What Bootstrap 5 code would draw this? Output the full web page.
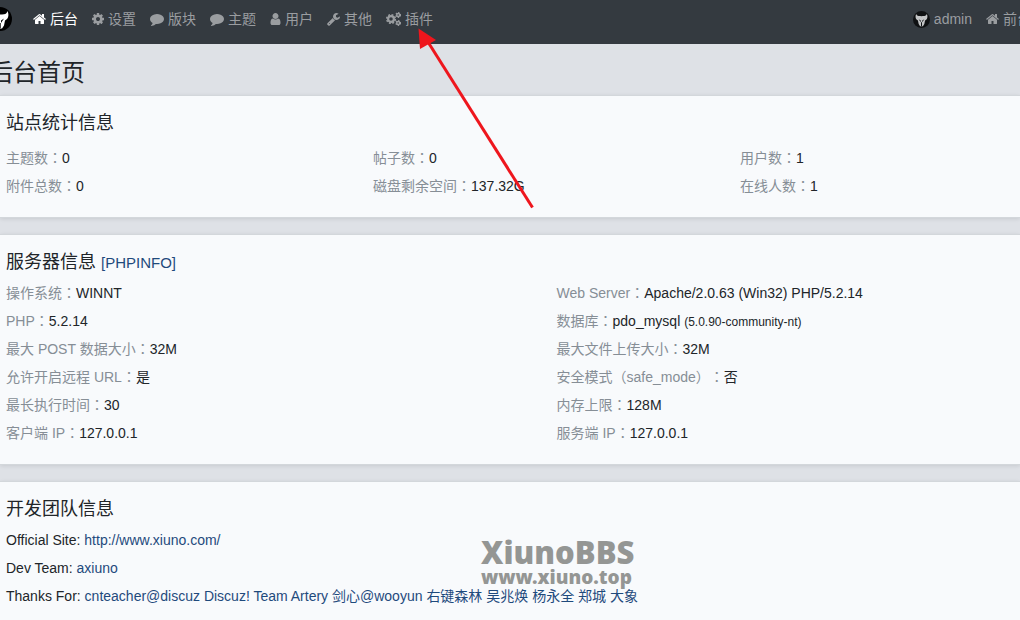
<!DOCTYPE html>
<html lang="zh-CN">
<head>
<meta charset="utf-8">
<meta name="viewport" content="width=device-width, initial-scale=1">
<title>后台首页</title>
<link href="https://cdn.jsdelivr.net/npm/bootstrap@5.3.0/dist/css/bootstrap.min.css" rel="stylesheet">
<style>
body{font:14px/28px "Liberation Sans","Noto Sans CJK SC",sans-serif;color:#212529;background:#dee1e6;overflow-x:hidden}
a{color:#1f4a7c;text-decoration:none}
.topbar{height:44px;padding-top:5px;background:#343a40;overflow:hidden}
.topbar .nav-link{color:#9a9da0;padding:0 7px;line-height:28px;display:flex;align-items:center;gap:4px;white-space:nowrap}
.topbar .nav-link.active{color:#fff}
.topbar .nav-link svg{fill:currentColor}
.topbar .navbar-brand{margin:0 14px 0 -12px;padding:0;line-height:1}
.topbar .side-nav{margin-right:-18px}
.page-title{font-size:24px;line-height:44px;padding-top:7px;margin:0 0 0 -11px;font-weight:400}
.panel{background:#f8fafc;border:solid #d3d7db;border-width:1px 0;border-radius:0;box-shadow:0 1px 4px rgba(0,0,0,.1);padding:16px 0 17px 6px;margin-bottom:16px;overflow:hidden}
.panel h2{font-size:18px;line-height:22px;margin:0 0 6px;font-weight:400}
.panel h2 a{font-size:15px;line-height:1}
.panel h2.stats-title{margin-bottom:10px}
.wide-row{width:calc(108% + 6px)}
.item-name{color:#868e96}
.mid{font-family:"Noto Sans CJK TC",sans-serif;line-height:1;text-spacing-trim:space-all;font-feature-settings:"chws" 0,"halt" 0;font-kerning:none}
.note{font-size:12px;line-height:1}
.arrow{left:410px;top:20px;z-index:5;pointer-events:none}
.brand-stamp{left:481px;top:536px;color:#949694;font-family:"Noto Sans",sans-serif;font-weight:900;font-size:31px;line-height:32px;pointer-events:none}
.brand-stamp small{display:block;font-size:19px;line-height:18px;font-weight:900}
</style>
</head>
<body class="position-relative">
<svg width="0" height="0" class="position-absolute" aria-hidden="true">
<symbol id="home" viewBox="64 0 1664 1792"><path d="M1472 992v480q0 26-19 45t-45 19h-384v-384h-256v384h-384q-26 0-45-19t-19-45v-480q0-1 .5-3t.5-3l575-474 575 474q1 2 1 6zm223-69l-62 74q-8 9-21 11h-3q-13 0-21-7l-692-577-692 577q-12 8-24 7-13-2-21-11l-62-74q-8-10-7-23.5t11-21.5l719-599q32-26 76-26t76 26l244 204v-195q0-14 9-23t23-9h192q14 0 23 9t9 23v408l219 182q10 8 11 21.5t-7 23.5z"/></symbol>
<symbol id="cog" viewBox="128 0 1536 1792"><path d="M1152 896q0-106-75-181t-181-75-181 75-75 181 75 181 181 75 181-75 75-181zm512-109v222q0 12-8 23t-20 13l-185 28q-19 54-39 91 35 50 107 138 10 12 10 25t-9 23q-27 37-99 108t-94 71q-12 0-26-9l-138-108q-44 23-91 38-16 136-29 186-7 28-36 28h-222q-14 0-24.500-8.500t-11.500-21.500l-28-184q-49-16-90-37l-141 107q-10 9-25 9-14 0-25-11-126-114-165-168-7-10-7-23 0-12 8-23 15-21 51-66.500t54-70.500q-27-50-41-99l-183-27q-13-2-21-12.500t-8-23.500v-222q0-12 8-23t19-13l186-28q14-46 39-92-40-57-107-138-10-12-10-24 0-10 9-23 26-36 98.500-107.500t94.500-71.500q13 0 26 10l138 107q44-23 91-38 16-136 29-186 7-28 36-28h222q14 0 24.500 8.500t11.500 21.500l28 184q49 16 90 37l142-107q9-9 24-9 13 0 25 10 129 119 165 170 7 8 7 22 0 12-8 23-15 21-51 66.500t-54 70.500q26 50 41 98l183 28q13 2 21 12.500t8 23.500z"/></symbol>
<symbol id="comment" viewBox="0 0 1792 1792"><path d="M1792 896q0 174-120 321.500t-326 233-450 85.500q-70 0-145-8-198 175-460 242-49 14-114 22-17 2-30.500-9t-17.500-29v-1q-3-4-.5-12t2-10 4.500-9.500l6-9 7-8.500 8-9q7-8 31-34.500t34.500-38 31-39.500 32.500-51 27-59 26-76q-157-89-247.500-220t-90.500-281q0-130 71-248.500t191-204.500 286-136.500 348-50.500q244 0 450 85.500t326 233 120 321.500z"/></symbol>
<symbol id="user" viewBox="256 0 1280 1792"><path d="M1536 1399q0 109-62.500 187t-150.500 78h-854q-88 0-150.500-78t-62.500-187q0-85 8.500-160.500t31.500-152 58.500-131 94-89 134.500-34.500q131 128 313 128t313-128q76 0 134.500 34.500t94 89 58.500 131 31.500 152 8.500 160.500zm-256-887q0 159-112.500 271.500t-271.500 112.500-271.500-112.500-112.500-271.500 112.500-271.500 271.500-112.500 271.500 112.500 112.500 271.500z"/></symbol>
<symbol id="wrench" viewBox="64 0 1664 1792"><path d="M448 1472q0-26-19-45t-45-19-45 19-19 45 19 45 45 19 45-19 19-45zm644-420l-682 682q-37 37-90 37-52 0-91-37l-106-108q-38-36-38-90 0-53 38-91l681-681q39 98 114.500 173.500t173.500 114.500zm634-435q0 39-23 106-47 134-164.500 217.500t-258.500 83.500q-185 0-316.500-131.500t-131.500-316.500 131.500-316.500 316.500-131.500q58 0 121.500 16.500t107.500 46.500q16 11 16 28t-16 28l-293 169v224l193 107q5-3 79-48.500t135.500-81 70.500-35.500q15 0 23.500 10t8.500 25z"/></symbol>
<symbol id="cogs" viewBox="0 0 15 14"><g fill="none" stroke="currentColor"><circle cx="5" cy="7" r="2.900" stroke-width="2.200"/><circle cx="5" cy="7" r="4.300" stroke-width="1.600" stroke-dasharray="1.900 1.477"/><circle cx="12.200" cy="3" r="1.500" stroke-width="1.400"/><circle cx="12.200" cy="3" r="2.300" stroke-width="1.200" stroke-dasharray="1.300 1.109"/><circle cx="12.200" cy="11" r="1.500" stroke-width="1.400"/><circle cx="12.200" cy="11" r="2.300" stroke-width="1.200" stroke-dasharray="1.300 1.109"/></g></symbol>
<symbol id="goat" viewBox="0 0 24 24"><circle cx="12" cy="12" r="12" fill="#000"/><path fill="#fff" d="M4.500 4c.5 2 1.500 3 3.500 3.200 2.500.3 5.500.3 8 0 2-.2 3-1.200 3.500-3.200 1.500 3 1 6.500-.5 8l-2 1.500-1 5-2 3h-4l-2-3-1-5-2-1.500c-1.500-1.500-2-5-.5-8z"/><path fill="#000" d="M8 11.500l3 2v2.500zM16 11.500l-3 2v2.500zM11.300 16h1.400v5h-1.400z"/></symbol>
</svg>

<header class="topbar navbar-dark">
<nav class="d-flex align-items-center">
<a class="navbar-brand" href="#" aria-label="Xiuno"><svg width="24" height="24"><use href="#goat"/></svg></a>
<div class="nav flex-nowrap">
<a class="nav-link active" href="#"><svg width="13" height="14"><use href="#home"/></svg>后台</a>
<a class="nav-link" href="#"><svg width="12" height="14"><use href="#cog"/></svg>设置</a>
<a class="nav-link" href="#"><svg width="14" height="14"><use href="#comment"/></svg>版块</a>
<a class="nav-link" href="#"><svg width="14" height="14"><use href="#comment"/></svg>主题</a>
<a class="nav-link" href="#"><svg width="11" height="14"><use href="#user"/></svg>用户</a>
<a class="nav-link" href="#"><svg width="13" height="14"><use href="#wrench"/></svg>其他</a>
<a class="nav-link" href="#"><svg width="15" height="14"><use href="#cogs"/></svg>插件</a>
</div>
<div class="nav flex-nowrap ms-auto side-nav">
<a class="nav-link" href="#"><svg width="17" height="17" opacity=".7"><use href="#goat"/></svg>admin</a>
<a class="nav-link" href="#"><svg width="13" height="14"><use href="#home"/></svg>前台</a>
</div>
</nav>
</header>

<main>
<h1 class="page-title">后台首页</h1>

<section class="panel">
<h2 class="stats-title">站点统计信息</h2>
<div class="row g-0 wide-row">
<div class="col-4"><span class="item-name">主题数<span class="mid" lang="zh-TW">：</span></span>0</div>
<div class="col-4"><span class="item-name">帖子数<span class="mid" lang="zh-TW">：</span></span>0</div>
<div class="col-4"><span class="item-name">用户数<span class="mid" lang="zh-TW">：</span></span>1</div>
<div class="col-4"><span class="item-name">附件总数<span class="mid" lang="zh-TW">：</span></span>0</div>
<div class="col-4"><span class="item-name">磁盘剩余空间<span class="mid" lang="zh-TW">：</span></span>137.32G</div>
<div class="col-4"><span class="item-name">在线人数<span class="mid" lang="zh-TW">：</span></span>1</div>
</div>
</section>

<section class="panel">
<h2>服务器信息 <a href="#">[PHPINFO]</a></h2>
<div class="row g-0 wide-row">
<div class="col-6"><span class="item-name">操作系统<span class="mid" lang="zh-TW">：</span></span>WINNT</div>
<div class="col-6"><span class="item-name">Web Server<span class="mid" lang="zh-TW">：</span></span>Apache/2.0.63 (Win32) PHP/5.2.14</div>
<div class="col-6"><span class="item-name">PHP<span class="mid" lang="zh-TW">：</span></span>5.2.14</div>
<div class="col-6"><span class="item-name">数据库<span class="mid" lang="zh-TW">：</span></span>pdo_mysql <span class="note">(5.0.90-community-nt)</span></div>
<div class="col-6"><span class="item-name">最大 POST 数据大小<span class="mid" lang="zh-TW">：</span></span>32M</div>
<div class="col-6"><span class="item-name">最大文件上传大小<span class="mid" lang="zh-TW">：</span></span>32M</div>
<div class="col-6"><span class="item-name">允许开启远程 URL<span class="mid" lang="zh-TW">：</span></span>是</div>
<div class="col-6"><span class="item-name">安全模式<span class="mid" lang="zh-TW">（</span>safe_mode<span class="mid" lang="zh-TW">）：</span></span>否</div>
<div class="col-6"><span class="item-name">最长执行时间<span class="mid" lang="zh-TW">：</span></span>30</div>
<div class="col-6"><span class="item-name">内存上限<span class="mid" lang="zh-TW">：</span></span>128M</div>
<div class="col-6"><span class="item-name">客户端 IP<span class="mid" lang="zh-TW">：</span></span>127.0.0.1</div>
<div class="col-6"><span class="item-name">服务端 IP<span class="mid" lang="zh-TW">：</span></span>127.0.0.1</div>
</div>
</section>

<section class="panel mb-0">
<h2>开发团队信息</h2>
<div>Official Site: <a href="#">http://www.xiuno.com/</a></div>
<div>Dev Team: <a href="#">axiuno</a></div>
<div>Thanks For: <a href="#">cnteacher@discuz</a> <a href="#">Discuz! Team</a> <a href="#">Artery</a> <a href="#">剑心@wooyun</a> <a href="#">右键森林</a> <a href="#">吴兆焕</a> <a href="#">杨永全</a> <a href="#">郑城</a> <a href="#">大象</a></div>
</section>
</main>

<svg class="arrow position-absolute" width="130" height="195" viewBox="410 20 130 195" aria-hidden="true"><path d="M428 42L532.500 207.500" stroke="#ee161d" stroke-width="3"/><path d="M418.500 28.500l17.500 11.500-16 9z" fill="#ee161d"/></svg>
<div class="brand-stamp position-absolute">XiunoBBS<small>www.xiuno.top</small></div>
<script src="https://cdn.jsdelivr.net/npm/bootstrap@5.3.0/dist/js/bootstrap.bundle.min.js"></script>
</body>
</html>
